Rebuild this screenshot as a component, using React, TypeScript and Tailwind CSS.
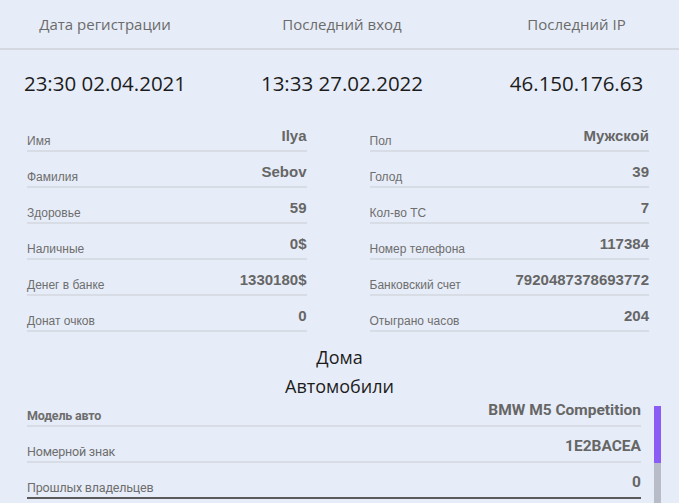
import React from 'react';

const head = [
  { label: 'Дата регистрации', value: '23:30 02.04.2021' },
  { label: 'Последний вход', value: '13:33 27.02.2022' },
  { label: 'Последний IP', value: '46.150.176.63' },
];

const left = [
  ['Имя', 'Ilya'],
  ['Фамилия', 'Sebov'],
  ['Здоровье', '59'],
  ['Наличные', '0$'],
  ['Денег в банке', '1330180$'],
  ['Донат очков', '0'],
];

const right = [
  ['Пол', 'Мужской'],
  ['Голод', '39'],
  ['Кол-во ТС', '7'],
  ['Номер телефона', '117384'],
  ['Банковский счет', '7920487378693772'],
  ['Отыграно часов', '204'],
];

const cars = [
  ['Модель авто', 'BMW M5 Competition'],
  ['Номерной знак', '1E2BACEA'],
  ['Прошлых владельцев', '0'],
];

const Row = ({ label, value }: { label: string; value: string }) => (
  <div className="flex h-9 items-end justify-between border-b-2 border-[#d7dce5] pb-[2px]">
    <span className="text-[12px] leading-[14px] text-[#6e6e6e]">{label}</span>
    <span className="mb-[4px] text-[15px] font-bold leading-[17px] text-[#666]">{value}</span>
  </div>
);

export default function App() {
  return (
    <div className="h-[503px] w-[679px] overflow-hidden bg-[#e7edf8] font-['Liberation_Sans',Arial,sans-serif]">
      <div className="grid h-[50px] grid-cols-[210px_264px_205px] items-center border-b-2 border-[#d3d8e1] pt-[1px] font-['Open_Sans',sans-serif] text-[15px] text-[#6b6b6b]">
        {head.map((h) => (
          <div key={h.label} className="text-center">{h.label}</div>
        ))}
      </div>
      <div className="grid h-[66px] grid-cols-[210px_264px_205px] items-center pt-[1px] font-['Open_Sans',sans-serif] text-[20.5px] font-medium text-[#1c1c1c]">
        {head.map((h) => (
          <div key={h.label} className="text-center">{h.value}</div>
        ))}
      </div>
      <div className="grid grid-cols-2 gap-x-[63px] pl-[27px] pr-[30px]">
        <div>
          {left.map(([l, v]) => (
            <Row key={l} label={l} value={v} />
          ))}
        </div>
        <div>
          {right.map(([l, v]) => (
            <Row key={l} label={l} value={v} />
          ))}
        </div>
      </div>
      <div className="mt-[13px] text-center font-['Open_Sans',sans-serif] text-[18px] leading-[24px] text-[#1c1c1c]">Дома</div>
      <div className="mt-[5px] text-center font-['Open_Sans',sans-serif] text-[18px] leading-[24px] text-[#1c1c1c]">Автомобили</div>
      <div className="mt-[8px] flex pl-[27px]">
        <div className="w-[614px] font-['Roboto',sans-serif]">
          {cars.map(([l, v], i) => (
            <div
              key={l}
              className={`flex items-end justify-between pb-[2px] ${i === 0 ? 'h-[21px]' : 'h-9'} ${
                i === 2 ? 'border-b-2 border-[#5a5a5a]' : 'border-b-2 border-[#d7dce5]'
              }`}
            >
              <span className={`text-[12.5px] leading-[14px] tracking-[-0.2px] text-[#6e6e6e] ${i === 0 ? 'font-bold' : ''}`}>{l}</span>
              <span className="mb-[4px] text-[15.5px] font-bold leading-[17px] text-[#666]">{v}</span>
            </div>
          ))}
        </div>
        <div className="ml-[13px] flex w-[7px] flex-col">
          <div className="h-[57px] bg-[#8b5cf6]" />
          <div className="h-[60px] bg-[#b8bcc8]" />
        </div>
      </div>
    </div>
  );
}
